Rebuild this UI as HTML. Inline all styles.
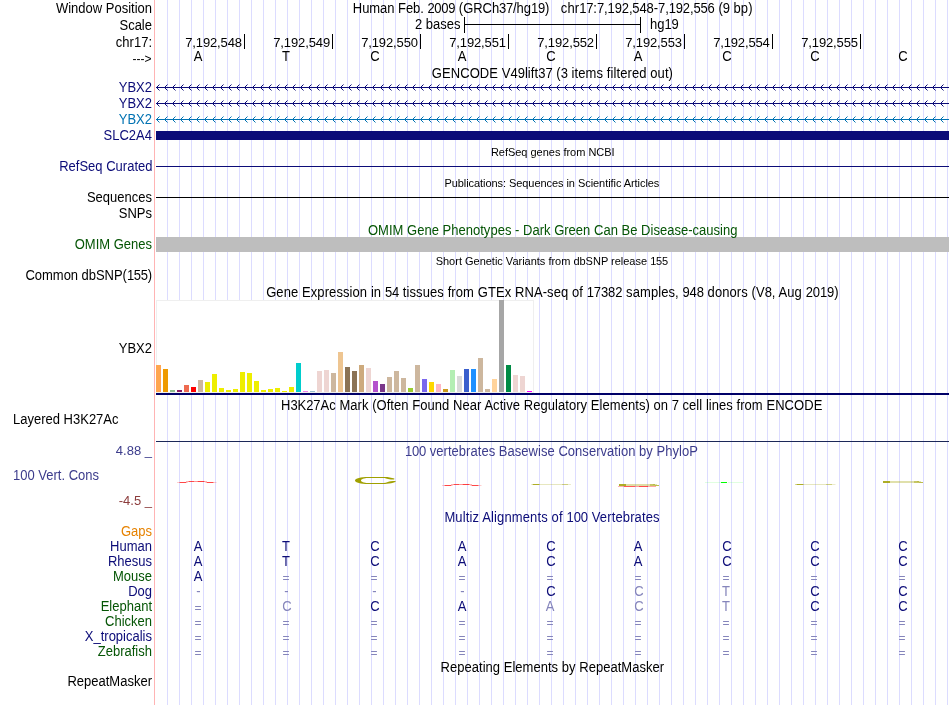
<!DOCTYPE html>
<html><head><meta charset="utf-8"><title>UCSC Genome Browser</title>
<style>
html,body{margin:0;padding:0;background:#fff;}
body{width:950px;height:705px;position:relative;overflow:hidden;font-family:"Liberation Sans",sans-serif;font-size:13px;color:#000;}
#w{position:absolute;left:0;top:0;width:950px;height:705px;will-change:transform;}
.t{position:absolute;white-space:nowrap;line-height:16px;height:16px;transform-origin:0 12px;transform:scaleY(1.06);}
.t i{font-style:normal;}
.g{position:absolute;top:0;width:1px;height:705px;background:#dcdcff;}
svg{position:absolute;left:0;top:0;}
</style></head><body><div id="w">

<div class="g" style="left:154px;background:#ffb4b4"></div>
<div class="g" style="left:167px"></div>
<div class="g" style="left:179px"></div>
<div class="g" style="left:191px"></div>
<div class="g" style="left:203px"></div>
<div class="g" style="left:215px"></div>
<div class="g" style="left:227px"></div>
<div class="g" style="left:239px"></div>
<div class="g" style="left:251px"></div>
<div class="g" style="left:263px"></div>
<div class="g" style="left:275px"></div>
<div class="g" style="left:287px"></div>
<div class="g" style="left:299px"></div>
<div class="g" style="left:311px"></div>
<div class="g" style="left:323px"></div>
<div class="g" style="left:335px"></div>
<div class="g" style="left:347px"></div>
<div class="g" style="left:359px"></div>
<div class="g" style="left:371px"></div>
<div class="g" style="left:383px"></div>
<div class="g" style="left:395px"></div>
<div class="g" style="left:407px"></div>
<div class="g" style="left:419px"></div>
<div class="g" style="left:431px"></div>
<div class="g" style="left:443px"></div>
<div class="g" style="left:455px"></div>
<div class="g" style="left:467px"></div>
<div class="g" style="left:479px"></div>
<div class="g" style="left:491px"></div>
<div class="g" style="left:503px"></div>
<div class="g" style="left:515px"></div>
<div class="g" style="left:527px"></div>
<div class="g" style="left:539px"></div>
<div class="g" style="left:551px"></div>
<div class="g" style="left:563px"></div>
<div class="g" style="left:575px"></div>
<div class="g" style="left:587px"></div>
<div class="g" style="left:599px"></div>
<div class="g" style="left:611px"></div>
<div class="g" style="left:623px"></div>
<div class="g" style="left:635px"></div>
<div class="g" style="left:647px"></div>
<div class="g" style="left:659px"></div>
<div class="g" style="left:671px"></div>
<div class="g" style="left:683px"></div>
<div class="g" style="left:695px"></div>
<div class="g" style="left:707px"></div>
<div class="g" style="left:719px"></div>
<div class="g" style="left:731px"></div>
<div class="g" style="left:743px"></div>
<div class="g" style="left:755px"></div>
<div class="g" style="left:767px"></div>
<div class="g" style="left:779px"></div>
<div class="g" style="left:791px"></div>
<div class="g" style="left:803px"></div>
<div class="g" style="left:815px"></div>
<div class="g" style="left:827px"></div>
<div class="g" style="left:839px"></div>
<div class="g" style="left:851px"></div>
<div class="g" style="left:863px"></div>
<div class="g" style="left:875px"></div>
<div class="g" style="left:887px"></div>
<div class="g" style="left:899px"></div>
<div class="g" style="left:911px"></div>
<div class="g" style="left:923px"></div>
<div class="g" style="left:935px"></div>
<div class="g" style="left:947px"></div>
<svg width="950" height="705" shape-rendering="crispEdges">
<defs>
<pattern id="a1" x="156" y="0" width="8" height="7" patternUnits="userSpaceOnUse"><path d="M0.5 3.5 L3.5 0.5 M0.5 3.5 L3.5 6.5" stroke="#0c0c78" stroke-width="1" fill="none" shape-rendering="auto"/></pattern>
<pattern id="a2" x="156" y="0" width="8" height="7" patternUnits="userSpaceOnUse"><path d="M0.5 3.5 L3.5 0.5 M0.5 3.5 L3.5 6.5" stroke="#0072b2" stroke-width="1" fill="none" shape-rendering="auto"/></pattern>
</defs>
<rect x="464" y="24" width="177" height="1" fill="#000"/>
<rect x="464" y="17" width="1" height="16" fill="#000"/>
<rect x="640" y="17" width="1" height="16" fill="#000"/>
<rect x="244" y="34" width="1" height="15" fill="#000"/>
<rect x="332" y="34" width="1" height="15" fill="#000"/>
<rect x="420" y="34" width="1" height="15" fill="#000"/>
<rect x="508" y="34" width="1" height="15" fill="#000"/>
<rect x="596" y="34" width="1" height="15" fill="#000"/>
<rect x="684" y="34" width="1" height="15" fill="#000"/>
<rect x="772" y="34" width="1" height="15" fill="#000"/>
<rect x="860" y="34" width="1" height="15" fill="#000"/>
<rect x="156" y="87" width="793" height="1" fill="#0c0c78"/>
<g transform="translate(0,84)"><rect x="156" y="0" width="789" height="7" fill="url(#a1)"/></g>
<rect x="156" y="103" width="793" height="1" fill="#0c0c78"/>
<g transform="translate(0,100)"><rect x="156" y="0" width="789" height="7" fill="url(#a1)"/></g>
<rect x="156" y="119" width="793" height="1" fill="#0072b2"/>
<g transform="translate(0,116)"><rect x="156" y="0" width="789" height="7" fill="url(#a2)"/></g>
<rect x="156" y="131" width="793" height="9" fill="#0c0c78"/>
<rect x="156" y="166" width="793" height="1" fill="#0c0c78"/>
<rect x="156" y="197" width="793" height="1" fill="#000"/>
<rect x="156" y="237" width="793" height="15" fill="#bebebe"/>
<rect x="156" y="441" width="793" height="1" fill="#1c2858"/>
<rect x="156.5" y="300.5" width="377" height="92" fill="#fff" stroke="#efefef" stroke-width="1"/>
<rect x="156" y="365" width="5" height="27" fill="#FFA54F"/>
<rect x="163" y="369" width="5" height="23" fill="#EE9A00"/>
<rect x="170" y="390" width="5" height="2" fill="#8FBC8F"/>
<rect x="177" y="390" width="5" height="2" fill="#8B1C62"/>
<rect x="184" y="385" width="5" height="7" fill="#EE6A50"/>
<rect x="191" y="387" width="5" height="5" fill="#FF0000"/>
<rect x="198" y="380" width="5" height="12" fill="#CDB79E"/>
<rect x="205" y="382" width="5" height="10" fill="#EEEE00"/>
<rect x="212" y="374" width="5" height="18" fill="#EEEE00"/>
<rect x="219" y="388" width="5" height="4" fill="#EEEE00"/>
<rect x="226" y="390" width="5" height="2" fill="#EEEE00"/>
<rect x="233" y="389" width="5" height="3" fill="#EEEE00"/>
<rect x="240" y="372" width="5" height="20" fill="#EEEE00"/>
<rect x="247" y="373" width="5" height="19" fill="#EEEE00"/>
<rect x="254" y="381" width="5" height="11" fill="#EEEE00"/>
<rect x="261" y="390" width="5" height="2" fill="#EEEE00"/>
<rect x="268" y="389" width="5" height="3" fill="#EEEE00"/>
<rect x="275" y="388" width="5" height="4" fill="#EEEE00"/>
<rect x="282" y="391" width="5" height="1" fill="#EEEE00"/>
<rect x="289" y="387" width="5" height="5" fill="#EEEE00"/>
<rect x="296" y="363" width="5" height="29" fill="#00CDCD"/>
<rect x="303" y="391" width="5" height="1" fill="#EE82EE"/>
<rect x="310" y="391" width="5" height="1" fill="#9AC0CD"/>
<rect x="317" y="371" width="5" height="21" fill="#EED5D2"/>
<rect x="324" y="370" width="5" height="22" fill="#EED5D2"/>
<rect x="331" y="373" width="5" height="19" fill="#CDB79E"/>
<rect x="338" y="352" width="5" height="40" fill="#EEC591"/>
<rect x="345" y="367" width="5" height="25" fill="#8B7355"/>
<rect x="352" y="371" width="5" height="21" fill="#8B7355"/>
<rect x="359" y="365" width="5" height="27" fill="#CDAA7D"/>
<rect x="366" y="368" width="5" height="24" fill="#EED5D2"/>
<rect x="373" y="381" width="5" height="11" fill="#B452CD"/>
<rect x="380" y="384" width="5" height="8" fill="#7A378B"/>
<rect x="387" y="377" width="5" height="15" fill="#CDB79E"/>
<rect x="394" y="371" width="5" height="21" fill="#CDB79E"/>
<rect x="401" y="378" width="5" height="14" fill="#CDB79E"/>
<rect x="408" y="388" width="5" height="4" fill="#9ACD32"/>
<rect x="415" y="365" width="5" height="27" fill="#CDB79E"/>
<rect x="422" y="379" width="5" height="13" fill="#7A67EE"/>
<rect x="429" y="382" width="5" height="10" fill="#FFD700"/>
<rect x="436" y="384" width="5" height="8" fill="#FFB6C1"/>
<rect x="443" y="389" width="5" height="3" fill="#CD9B1D"/>
<rect x="450" y="370" width="5" height="22" fill="#B4EEB4"/>
<rect x="457" y="376" width="5" height="16" fill="#D9D9D9"/>
<rect x="464" y="369" width="5" height="23" fill="#3A5FCD"/>
<rect x="471" y="369" width="5" height="23" fill="#1E90FF"/>
<rect x="478" y="358" width="5" height="34" fill="#CDB79E"/>
<rect x="485" y="389" width="5" height="3" fill="#CDB79E"/>
<rect x="492" y="379" width="5" height="13" fill="#FFD39B"/>
<rect x="499" y="300" width="5" height="92" fill="#A6A6A6"/>
<rect x="506" y="365" width="5" height="27" fill="#008B45"/>
<rect x="513" y="375" width="5" height="17" fill="#EED5D2"/>
<rect x="520" y="376" width="5" height="16" fill="#EED5D2"/>
<rect x="527" y="391" width="5" height="1" fill="#FF00FF"/>
<rect x="156" y="393" width="793" height="2" fill="#000068"/>
<g shape-rendering="auto">
<rect x="177" y="482" width="2.5" height="1" fill="#f00" fill-opacity="0.2"/>
<rect x="179.5" y="482" width="6.5" height="1" fill="#f00" fill-opacity="0.72"/>
<rect x="186" y="482" width="1.5" height="1" fill="#f00" fill-opacity="0.35"/>
<rect x="186" y="481" width="2.5" height="1" fill="#f00" fill-opacity="0.3"/>
<rect x="188.5" y="481" width="5.5" height="1" fill="#f00" fill-opacity="0.7"/>
<rect x="194" y="481" width="3.5" height="1" fill="#f00" fill-opacity="0.42"/>
<rect x="197.5" y="481" width="7" height="1" fill="#f00" fill-opacity="0.75"/>
<rect x="204.5" y="481" width="2.5" height="1" fill="#f00" fill-opacity="0.3"/>
<rect x="205.5" y="482" width="1.5" height="1" fill="#f00" fill-opacity="0.35"/>
<rect x="207" y="482" width="6.5" height="1" fill="#f00" fill-opacity="0.72"/>
<rect x="213.5" y="482" width="3" height="1" fill="#f00" fill-opacity="0.2"/>
<rect x="442" y="485" width="2.5" height="1" fill="#f00" fill-opacity="0.2"/>
<rect x="444.5" y="485" width="6.5" height="1" fill="#f00" fill-opacity="0.72"/>
<rect x="451" y="485" width="1.5" height="1" fill="#f00" fill-opacity="0.35"/>
<rect x="451" y="484" width="2.5" height="1" fill="#f00" fill-opacity="0.3"/>
<rect x="453.5" y="484" width="5.5" height="1" fill="#f00" fill-opacity="0.7"/>
<rect x="459" y="484" width="3.5" height="1" fill="#f00" fill-opacity="0.42"/>
<rect x="462.5" y="484" width="7" height="1" fill="#f00" fill-opacity="0.75"/>
<rect x="469.5" y="484" width="2.5" height="1" fill="#f00" fill-opacity="0.3"/>
<rect x="470.5" y="485" width="1.5" height="1" fill="#f00" fill-opacity="0.35"/>
<rect x="472" y="485" width="6.5" height="1" fill="#f00" fill-opacity="0.72"/>
<rect x="478.5" y="485" width="3" height="1" fill="#f00" fill-opacity="0.2"/>
<path fill="#a0a000" d="M368 476.9 L385 476.9 C388 476.9 391.5 477.6 394.4 478.5 L394.2 479.4 C391 479.5 388.5 479.3 387 478.7 C385.8 478.2 385 477.9 383.5 477.9 L368 477.9 C364 477.9 361 479.2 361 480.4 C361 481.6 364 482.9 368 482.9 L383.5 482.9 C385 482.9 386.5 482.5 387.8 481.9 C389.5 481.2 392 480.9 395.5 480.9 L395.8 481.4 C394.5 482.3 392 483.1 389 483.5 C387.5 483.8 386 483.9 385 483.9 L368 483.9 C361 483.9 355 482.4 355 480.4 C355 478.4 361 476.9 368 476.9 Z"/>
<rect x="531.5" y="484" width="1.5" height="1" fill="#a0a000" fill-opacity="0.4"/>
<rect x="533" y="484" width="6.5" height="1" fill="#a0a000" fill-opacity="0.85"/>
<rect x="539.5" y="484" width="22.5" height="1" fill="#a0a000" fill-opacity="0.25"/>
<rect x="562" y="484" width="6" height="1" fill="#a0a000" fill-opacity="0.5"/>
<rect x="568" y="484" width="3" height="1" fill="#a0a000" fill-opacity="0.2"/>
<rect x="619" y="484" width="7" height="2" fill="#a0a000" fill-opacity="0.85"/>
<rect x="626" y="484" width="24" height="2" fill="#a0a000" fill-opacity="0.35"/>
<rect x="650" y="484" width="5" height="2" fill="#a0a000" fill-opacity="0.6"/>
<rect x="655" y="485" width="4" height="1" fill="#a0a000" fill-opacity="0.7"/>
<rect x="653" y="484" width="4" height="1" fill="#a0a000" fill-opacity="0.3"/>
<rect x="618" y="486" width="6" height="1" fill="#f00" fill-opacity="0.3"/>
<rect x="624" y="486" width="11" height="1" fill="#f00" fill-opacity="0.65"/>
<rect x="635" y="486" width="4" height="1" fill="#f00" fill-opacity="0.4"/>
<rect x="639" y="486" width="9" height="1" fill="#f00" fill-opacity="0.7"/>
<rect x="648" y="486" width="8" height="1" fill="#f00" fill-opacity="0.35"/>
<rect x="705" y="482" width="16" height="1" fill="#0f0" fill-opacity="0.12"/>
<rect x="721" y="482" width="6" height="1" fill="#0f0" fill-opacity="1"/>
<rect x="728" y="482" width="15" height="1" fill="#0f0" fill-opacity="0.12"/>
<rect x="795" y="484" width="1.5" height="1" fill="#a0a000" fill-opacity="0.4"/>
<rect x="796.5" y="484" width="7" height="1" fill="#a0a000" fill-opacity="0.85"/>
<rect x="803.5" y="484" width="22.5" height="1" fill="#a0a000" fill-opacity="0.25"/>
<rect x="826" y="484" width="6" height="1" fill="#a0a000" fill-opacity="0.5"/>
<rect x="832" y="484" width="3.5" height="1" fill="#a0a000" fill-opacity="0.2"/>
<rect x="883" y="481" width="7" height="2" fill="#a0a000" fill-opacity="0.85"/>
<rect x="890" y="481" width="24" height="2" fill="#a0a000" fill-opacity="0.33"/>
<rect x="914" y="481" width="5" height="2" fill="#a0a000" fill-opacity="0.6"/>
<rect x="919" y="482" width="4" height="1" fill="#a0a000" fill-opacity="0.7"/>
<rect x="917" y="481" width="4" height="1" fill="#a0a000" fill-opacity="0.3"/>
</g>
</svg>
<div class="t" style="right:798px;top:1px;">Window Position</div>
<div class="t" style="right:798px;top:18px;">Scale</div>
<div class="t" style="right:798px;top:35px;">chr17:</div>
<div class="t" style="right:798.5px;top:51px;font-size:12px;">---&gt;</div>
<div class="t" style="right:798px;top:80px;color:#0c0c78;">YBX2</div>
<div class="t" style="right:798px;top:96px;color:#0c0c78;">YBX2</div>
<div class="t" style="right:798px;top:112px;color:#0072b2;">YBX2</div>
<div class="t" style="right:798px;top:128px;color:#0c0c78;">SLC2A4</div>
<div class="t" style="left:59.20px;top:159px;color:#0c0c78;letter-spacing:0.008px;">RefSeq Curated</div>
<div class="t" style="right:798px;top:190px;">Sequences</div>
<div class="t" style="right:798px;top:206px;">SNPs</div>
<div class="t" style="right:798px;top:237px;color:#055505;">OMIM Genes</div>
<div class="t" style="left:25.53px;top:268px;letter-spacing:-0.040px;">Common dbSNP(<i style="letter-spacing:-0.240px">155</i>)</div>
<div class="t" style="right:798px;top:341px;">YBX2</div>
<div class="t" style="right:798px;top:443px;color:#3c3c8c;transform:none;">4.88 _</div>
<div class="t" style="right:798px;top:493px;color:#8c3c3c;transform:none;">-4.5 _</div>
<div class="t" style="right:798px;top:524px;color:#e68200;">Gaps</div>
<div class="t" style="right:798px;top:539px;color:#0c0c78;">Human</div>
<div class="t" style="right:798px;top:554px;color:#0c0c78;">Rhesus</div>
<div class="t" style="right:798px;top:569px;color:#055505;">Mouse</div>
<div class="t" style="right:798px;top:584px;color:#0c0c78;">Dog</div>
<div class="t" style="right:798px;top:599px;color:#055505;">Elephant</div>
<div class="t" style="right:798px;top:614px;color:#055505;">Chicken</div>
<div class="t" style="right:798px;top:629px;color:#0c0c78;">X_tropicalis</div>
<div class="t" style="right:798px;top:644px;color:#055505;">Zebrafish</div>
<div class="t" style="right:798px;top:674px;">RepeatMasker</div>
<div class="t" style="left:13px;top:412px;">Layered H3K27Ac</div>
<div class="t" style="left:13px;top:468px;color:#3c3c8c;">100 Vert. Cons</div>
<div class="t" style="left:352.80px;top:1px;letter-spacing:-0.050px;">Human Feb. <i style="letter-spacing:-0.250px">2009</i> (GRCh<i style="letter-spacing:-0.250px">37</i>/hg<i style="letter-spacing:-0.250px">19</i>)</div>
<div class="t" style="left:560.86px;top:1px;letter-spacing:0.066px;">chr<i style="letter-spacing:-0.134px">17</i>:<i style="letter-spacing:-0.134px">7,192,548</i>-<i style="letter-spacing:-0.134px">7,192,556</i> (<i style="letter-spacing:-0.134px">9</i> bp)</div>
<div class="t" style="left:415.06px;top:17px;letter-spacing:0.030px;"><i style="letter-spacing:-0.170px">2</i> bases</div>
<div class="t" style="left:650.00px;top:17px;letter-spacing:-0.033px;">hg<i style="letter-spacing:-0.233px">19</i></div>
<div class="t" style="left:431.73px;top:66px;letter-spacing:0.096px;">GENCODE V<i style="letter-spacing:-0.104px">49</i>lift<i style="letter-spacing:-0.104px">37</i> (<i style="letter-spacing:-0.104px">3</i> items filtered out)</div>
<div class="t" style="left:490.90px;top:144px;font-size:11px;letter-spacing:-0.019px;transform:none;">RefSeq genes from NCBI</div>
<div class="t" style="left:444.40px;top:175px;font-size:11px;letter-spacing:-0.060px;transform:none;">Publications: Sequences in Scientific Articles</div>
<div class="t" style="left:367.99px;top:223px;color:#055505;letter-spacing:0.017px;">OMIM Gene Phenotypes - Dark Green Can Be Disease-causing</div>
<div class="t" style="left:435.69px;top:253px;font-size:11px;letter-spacing:-0.009px;transform:none;">Short Genetic Variants from dbSNP release <i style="letter-spacing:-0.209px">155</i></div>
<div class="t" style="left:266.13px;top:285px;letter-spacing:0.089px;">Gene Expression in <i style="letter-spacing:-0.111px">54</i> tissues from GTEx RNA-seq of <i style="letter-spacing:-0.111px">17382</i> samples, <i style="letter-spacing:-0.111px">948</i> donors (V<i style="letter-spacing:-0.111px">8</i>, Aug <i style="letter-spacing:-0.111px">2019</i>)</div>
<div class="t" style="left:281.00px;top:398px;letter-spacing:0.053px;">H<i style="letter-spacing:-0.147px">3</i>K<i style="letter-spacing:-0.147px">27</i>Ac Mark (Often Found Near Active Regulatory Elements) on <i style="letter-spacing:-0.147px">7</i> cell lines from ENCODE</div>
<div class="t" style="left:404.90px;top:444px;color:#3c3c8c;letter-spacing:0.037px;"><i style="letter-spacing:-0.163px">100</i> vertebrates Basewise Conservation by PhyloP</div>
<div class="t" style="left:444.40px;top:510px;color:#0c0c78;letter-spacing:0.137px;">Multiz Alignments of <i style="letter-spacing:-0.063px">100</i> Vertebrates</div>
<div class="t" style="left:440.60px;top:660px;letter-spacing:0.027px;">Repeating Elements by RepeatMasker</div>
<div class="t" style="left:185.16px;top:35px;letter-spacing:0.083px;transform:none;"><i style="letter-spacing:-0.117px">7,192,548</i></div>
<div class="t" style="left:273.16px;top:35px;letter-spacing:0.090px;transform:none;"><i style="letter-spacing:-0.110px">7,192,549</i></div>
<div class="t" style="left:361.16px;top:35px;letter-spacing:0.074px;transform:none;"><i style="letter-spacing:-0.126px">7,192,550</i></div>
<div class="t" style="left:449.16px;top:35px;letter-spacing:0.087px;transform:none;"><i style="letter-spacing:-0.113px">7,192,551</i></div>
<div class="t" style="left:537.16px;top:35px;letter-spacing:0.089px;transform:none;"><i style="letter-spacing:-0.111px">7,192,552</i></div>
<div class="t" style="left:625.16px;top:35px;letter-spacing:0.086px;transform:none;"><i style="letter-spacing:-0.114px">7,192,553</i></div>
<div class="t" style="left:713.16px;top:35px;letter-spacing:0.053px;transform:none;"><i style="letter-spacing:-0.147px">7,192,554</i></div>
<div class="t" style="left:801.16px;top:35px;letter-spacing:0.085px;transform:none;"><i style="letter-spacing:-0.115px">7,192,555</i></div>
<div class="t" style="left:198px;transform:translateX(-50%) scaleY(1.06);top:49px;">A</div>
<div class="t" style="left:286px;transform:translateX(-50%) scaleY(1.06);top:49px;">T</div>
<div class="t" style="left:375px;transform:translateX(-50%) scaleY(1.06);top:49px;">C</div>
<div class="t" style="left:462px;transform:translateX(-50%) scaleY(1.06);top:49px;">A</div>
<div class="t" style="left:551px;transform:translateX(-50%) scaleY(1.06);top:49px;">C</div>
<div class="t" style="left:638px;transform:translateX(-50%) scaleY(1.06);top:49px;">A</div>
<div class="t" style="left:727px;transform:translateX(-50%) scaleY(1.06);top:49px;">C</div>
<div class="t" style="left:815px;transform:translateX(-50%) scaleY(1.06);top:49px;">C</div>
<div class="t" style="left:903px;transform:translateX(-50%) scaleY(1.06);top:49px;">C</div>
<div class="t" style="left:198px;transform:translateX(-50%) scaleY(1.06);top:539px;color:#0c0c78;">A</div>
<div class="t" style="left:286px;transform:translateX(-50%) scaleY(1.06);top:539px;color:#0c0c78;">T</div>
<div class="t" style="left:375px;transform:translateX(-50%) scaleY(1.06);top:539px;color:#0c0c78;">C</div>
<div class="t" style="left:462px;transform:translateX(-50%) scaleY(1.06);top:539px;color:#0c0c78;">A</div>
<div class="t" style="left:551px;transform:translateX(-50%) scaleY(1.06);top:539px;color:#0c0c78;">C</div>
<div class="t" style="left:638px;transform:translateX(-50%) scaleY(1.06);top:539px;color:#0c0c78;">A</div>
<div class="t" style="left:727px;transform:translateX(-50%) scaleY(1.06);top:539px;color:#0c0c78;">C</div>
<div class="t" style="left:815px;transform:translateX(-50%) scaleY(1.06);top:539px;color:#0c0c78;">C</div>
<div class="t" style="left:903px;transform:translateX(-50%) scaleY(1.06);top:539px;color:#0c0c78;">C</div>
<div class="t" style="left:198px;transform:translateX(-50%) scaleY(1.06);top:554px;color:#0c0c78;">A</div>
<div class="t" style="left:286px;transform:translateX(-50%) scaleY(1.06);top:554px;color:#0c0c78;">T</div>
<div class="t" style="left:375px;transform:translateX(-50%) scaleY(1.06);top:554px;color:#0c0c78;">C</div>
<div class="t" style="left:462px;transform:translateX(-50%) scaleY(1.06);top:554px;color:#0c0c78;">A</div>
<div class="t" style="left:551px;transform:translateX(-50%) scaleY(1.06);top:554px;color:#0c0c78;">C</div>
<div class="t" style="left:638px;transform:translateX(-50%) scaleY(1.06);top:554px;color:#0c0c78;">A</div>
<div class="t" style="left:727px;transform:translateX(-50%) scaleY(1.06);top:554px;color:#0c0c78;">C</div>
<div class="t" style="left:815px;transform:translateX(-50%) scaleY(1.06);top:554px;color:#0c0c78;">C</div>
<div class="t" style="left:903px;transform:translateX(-50%) scaleY(1.06);top:554px;color:#0c0c78;">C</div>
<div class="t" style="left:198px;transform:translateX(-50%) scaleY(1.06);top:569px;color:#0c0c78;">A</div>
<div class="t" style="left:286px;transform:translateX(-50%) scaleY(1.06);top:570px;color:#8585bb;font-size:12px;">=</div>
<div class="t" style="left:374px;transform:translateX(-50%) scaleY(1.06);top:570px;color:#8585bb;font-size:12px;">=</div>
<div class="t" style="left:462px;transform:translateX(-50%) scaleY(1.06);top:570px;color:#8585bb;font-size:12px;">=</div>
<div class="t" style="left:550px;transform:translateX(-50%) scaleY(1.06);top:570px;color:#8585bb;font-size:12px;">=</div>
<div class="t" style="left:638px;transform:translateX(-50%) scaleY(1.06);top:570px;color:#8585bb;font-size:12px;">=</div>
<div class="t" style="left:726px;transform:translateX(-50%) scaleY(1.06);top:570px;color:#8585bb;font-size:12px;">=</div>
<div class="t" style="left:814px;transform:translateX(-50%) scaleY(1.06);top:570px;color:#8585bb;font-size:12px;">=</div>
<div class="t" style="left:902px;transform:translateX(-50%) scaleY(1.06);top:570px;color:#8585bb;font-size:12px;">=</div>
<div class="t" style="left:198.5px;transform:translateX(-50%) scaleY(1.06);top:584px;color:#8585bb;">-</div>
<div class="t" style="left:286.5px;transform:translateX(-50%) scaleY(1.06);top:584px;color:#8585bb;">-</div>
<div class="t" style="left:374.5px;transform:translateX(-50%) scaleY(1.06);top:584px;color:#8585bb;">-</div>
<div class="t" style="left:462.5px;transform:translateX(-50%) scaleY(1.06);top:584px;color:#8585bb;">-</div>
<div class="t" style="left:551px;transform:translateX(-50%) scaleY(1.06);top:584px;color:#0c0c78;">C</div>
<div class="t" style="left:639px;transform:translateX(-50%) scaleY(1.06);top:584px;color:#8585bb;">C</div>
<div class="t" style="left:726px;transform:translateX(-50%) scaleY(1.06);top:584px;color:#8585bb;">T</div>
<div class="t" style="left:815px;transform:translateX(-50%) scaleY(1.06);top:584px;color:#0c0c78;">C</div>
<div class="t" style="left:903px;transform:translateX(-50%) scaleY(1.06);top:584px;color:#0c0c78;">C</div>
<div class="t" style="left:198px;transform:translateX(-50%) scaleY(1.06);top:600px;color:#8585bb;font-size:12px;">=</div>
<div class="t" style="left:287px;transform:translateX(-50%) scaleY(1.06);top:599px;color:#8585bb;">C</div>
<div class="t" style="left:375px;transform:translateX(-50%) scaleY(1.06);top:599px;color:#0c0c78;">C</div>
<div class="t" style="left:462px;transform:translateX(-50%) scaleY(1.06);top:599px;color:#0c0c78;">A</div>
<div class="t" style="left:550px;transform:translateX(-50%) scaleY(1.06);top:599px;color:#8585bb;">A</div>
<div class="t" style="left:639px;transform:translateX(-50%) scaleY(1.06);top:599px;color:#8585bb;">C</div>
<div class="t" style="left:726px;transform:translateX(-50%) scaleY(1.06);top:599px;color:#8585bb;">T</div>
<div class="t" style="left:815px;transform:translateX(-50%) scaleY(1.06);top:599px;color:#0c0c78;">C</div>
<div class="t" style="left:903px;transform:translateX(-50%) scaleY(1.06);top:599px;color:#0c0c78;">C</div>
<div class="t" style="left:198px;transform:translateX(-50%) scaleY(1.06);top:615px;color:#8585bb;font-size:12px;">=</div>
<div class="t" style="left:286px;transform:translateX(-50%) scaleY(1.06);top:615px;color:#8585bb;font-size:12px;">=</div>
<div class="t" style="left:374px;transform:translateX(-50%) scaleY(1.06);top:615px;color:#8585bb;font-size:12px;">=</div>
<div class="t" style="left:462px;transform:translateX(-50%) scaleY(1.06);top:615px;color:#8585bb;font-size:12px;">=</div>
<div class="t" style="left:550px;transform:translateX(-50%) scaleY(1.06);top:615px;color:#8585bb;font-size:12px;">=</div>
<div class="t" style="left:638px;transform:translateX(-50%) scaleY(1.06);top:615px;color:#8585bb;font-size:12px;">=</div>
<div class="t" style="left:726px;transform:translateX(-50%) scaleY(1.06);top:615px;color:#8585bb;font-size:12px;">=</div>
<div class="t" style="left:814px;transform:translateX(-50%) scaleY(1.06);top:615px;color:#8585bb;font-size:12px;">=</div>
<div class="t" style="left:902px;transform:translateX(-50%) scaleY(1.06);top:615px;color:#8585bb;font-size:12px;">=</div>
<div class="t" style="left:198px;transform:translateX(-50%) scaleY(1.06);top:630px;color:#8585bb;font-size:12px;">=</div>
<div class="t" style="left:286px;transform:translateX(-50%) scaleY(1.06);top:630px;color:#8585bb;font-size:12px;">=</div>
<div class="t" style="left:374px;transform:translateX(-50%) scaleY(1.06);top:630px;color:#8585bb;font-size:12px;">=</div>
<div class="t" style="left:462px;transform:translateX(-50%) scaleY(1.06);top:630px;color:#8585bb;font-size:12px;">=</div>
<div class="t" style="left:550px;transform:translateX(-50%) scaleY(1.06);top:630px;color:#8585bb;font-size:12px;">=</div>
<div class="t" style="left:638px;transform:translateX(-50%) scaleY(1.06);top:630px;color:#8585bb;font-size:12px;">=</div>
<div class="t" style="left:726px;transform:translateX(-50%) scaleY(1.06);top:630px;color:#8585bb;font-size:12px;">=</div>
<div class="t" style="left:814px;transform:translateX(-50%) scaleY(1.06);top:630px;color:#8585bb;font-size:12px;">=</div>
<div class="t" style="left:902px;transform:translateX(-50%) scaleY(1.06);top:630px;color:#8585bb;font-size:12px;">=</div>
<div class="t" style="left:198px;transform:translateX(-50%) scaleY(1.06);top:645px;color:#8585bb;font-size:12px;">=</div>
<div class="t" style="left:286px;transform:translateX(-50%) scaleY(1.06);top:645px;color:#8585bb;font-size:12px;">=</div>
<div class="t" style="left:374px;transform:translateX(-50%) scaleY(1.06);top:645px;color:#8585bb;font-size:12px;">=</div>
<div class="t" style="left:462px;transform:translateX(-50%) scaleY(1.06);top:645px;color:#8585bb;font-size:12px;">=</div>
<div class="t" style="left:550px;transform:translateX(-50%) scaleY(1.06);top:645px;color:#8585bb;font-size:12px;">=</div>
<div class="t" style="left:638px;transform:translateX(-50%) scaleY(1.06);top:645px;color:#8585bb;font-size:12px;">=</div>
<div class="t" style="left:726px;transform:translateX(-50%) scaleY(1.06);top:645px;color:#8585bb;font-size:12px;">=</div>
<div class="t" style="left:814px;transform:translateX(-50%) scaleY(1.06);top:645px;color:#8585bb;font-size:12px;">=</div>
<div class="t" style="left:902px;transform:translateX(-50%) scaleY(1.06);top:645px;color:#8585bb;font-size:12px;">=</div>
</div></body></html>
